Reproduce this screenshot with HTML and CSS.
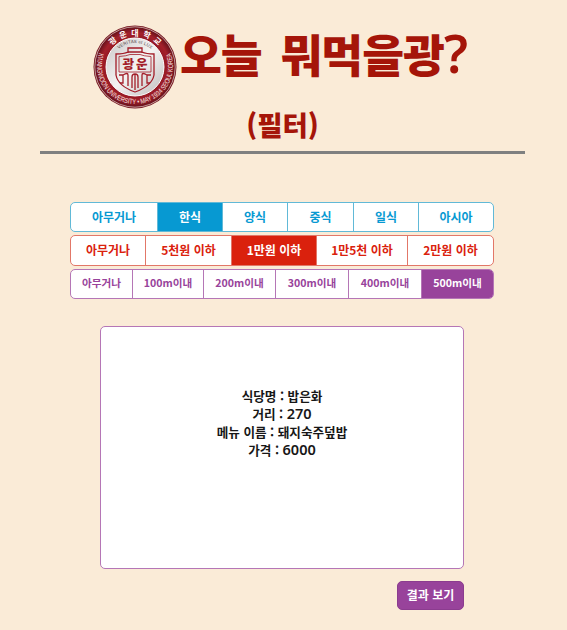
FILE: index.html
```
<!DOCTYPE html>
<html lang="ko">
<head>
<meta charset="utf-8">
<title>오늘 뭐먹을광?</title>
<link rel="stylesheet" href="styles.css">
</head>
<body>
<header class="header">
  <div class="brand">
    <svg class="logo" viewBox="0 0 84 84">
      <defs>
        <radialGradient id="rim"><stop offset=".65" stop-color="#8e1520"/><stop offset=".85" stop-color="#a3202b"/><stop offset="1" stop-color="#64101a"/></radialGradient>
        <linearGradient id="disc" x1="0" y1="0" x2="1" y2="1"><stop offset="0" stop-color="#c9c6c6"/><stop offset=".5" stop-color="#f5f3f2"/><stop offset="1" stop-color="#bebbbb"/></linearGradient>
        <path id="top" d="M10.5 42a31.5 31.5 0 0 1 63 0"/>
        <path id="bottom" d="M6.5 27.5A38 38 0 1 0 77.5 27.5"/>
        <path id="motto" d="M18 42a24 24 0 0 1 48 0"/>
      </defs>
      <circle cx="42" cy="42" r="41.5" fill="#781923"/>
      <circle cx="42" cy="42" r="40.2" fill="url(#rim)" stroke="#d7b9b5" stroke-width=".8"/>
      <circle cx="42" cy="42" r="29" fill="url(#disc)" stroke="#fff" stroke-width="1"/>
      <text class="seal-top"><textPath href="#top" startOffset="50%" text-anchor="middle" textLength="52">광운대학교</textPath></text>
      <text class="seal-bottom"><textPath href="#bottom" startOffset="50%" text-anchor="middle" textLength="146" lengthAdjust="spacingAndGlyphs">KWANGWOON UNIVERSITY • MAY 1934 SEOUL KOREA</textPath></text>
      <text class="seal-motto"><textPath href="#motto" startOffset="50%" text-anchor="middle" textLength="35">VERITAS et LUX</textPath></text>
      <g fill="none" stroke="#a31d29" stroke-width="1.3">
        <path d="M35 28V23H49V28M23 29Q31 29 35 27H49Q53 29 61 29V50Q59 61 42 67Q25 61 23 50Z"/>
        <path d="M26 31.5Q34 31 37 29.5H47Q50 31 58 31.5V47H26Z" stroke-width=".8"/>
        <path d="M26 50H30V58H27M30 50Q35 47 35 50V61M39 63V52Q39 49 42 49M45 63V52Q45 49 42 49V65M49 61V50Q49 47 54 50V58H57M54 50H58" stroke-width="1.3"/>
      </g>
      <text class="seal-name" x="42" y="43.8" text-anchor="middle" textLength="25">광운</text>
    </svg>
    <h1 class="title">오늘 뭐먹을광<span class="mark">?</span></h1>
  </div>
  <h2 class="subtitle">(필터)</h2>
</header>
<main class="content">
  <div class="filters">
    <div class="group food"><span>아무거나</span><span class="on">한식</span><span>양식</span><span>중식</span><span>일식</span><span>아시아</span></div>
    <div class="group price"><span>아무거나</span><span>5천원 이하</span><span class="on">1만원 이하</span><span>1만5천 이하</span><span>2만원 이하</span></div>
    <div class="group distance"><span>아무거나</span><span>100m이내</span><span>200m이내</span><span>300m이내</span><span>400m이내</span><span class="on">500m이내</span></div>
  </div>
  <section class="result">
    <p>식당명 : 밥은화</p>
    <p>거리 : <span class="num">270</span></p>
    <p>메뉴 이름 : 돼지숙주덮밥</p>
    <p>가격 : <span class="num">6000</span></p>
  </section>
  <div class="actions"><button class="submit">결과 보기</button></div>
</main>
</body>
</html>
```
FILE: styles.css
```
* { box-sizing: border-box; }
body {
  margin: 0;
  height: 630px;
  overflow: hidden;
  background: #faebd7;
  font-family: "Noto Sans CJK KR", sans-serif;
}
h1, h2, p { margin: 0; }
.header {
  width: 485px;
  height: 154px;
  margin-left: 40px;
  border-bottom: 3px solid #7f8080;
}
.brand { display: flex; height: 108px; padding: 25px 0 0 53px; }
.logo { flex: none; width: 84px; height: 84px; }
.title {
  margin: 5px 0 0 3px;
  color: #a51509;
  font-size: 45.5px;
  font-weight: 900;
  line-height: 46px;
  letter-spacing: -1px;
  word-spacing: 7px;
  white-space: pre;
}
.mark { font-family: "Noto Sans", sans-serif; font-size: 52px; font-weight: 600; line-height: 1px; }
.subtitle {
  color: #a51509;
  font-size: 27.5px;
  font-weight: 900;
  line-height: 32px;
  text-align: center;
}
.seal-top { fill: #fff; font-size: 8px; font-weight: 700; }
.seal-bottom { fill: #f5e4e1; font: 7.2px "Liberation Sans", sans-serif; }
.seal-motto { fill: #55474a; font: 4.4px "Liberation Sans", sans-serif; }
.seal-name { fill: #a31d29; font-size: 12.5px; font-weight: 900; }
.content { padding: 48px 73px 0 70px; }
.filters { display: grid; gap: 3px; }
.group {
  display: grid;
  height: 30.3px;
  overflow: hidden;
  border: 1px solid var(--line);
  border-radius: 5px;
  background: #fff;
  color: var(--main);
  font-size: 12px;
  font-weight: 700;
  line-height: 27px;
  text-align: center;
  white-space: nowrap;
}
.group span + span { border-left: 1px solid var(--line); }
.group .on { background: var(--main); color: #fff; }
.food { --main: #0799d2; --line: #61b9d7; grid-template-columns: 86px 65px 65px 66px 65px 1fr; }
.price { --main: #da210d; --line: #e27768; grid-template-columns: 74px 86px 85px 91px 1fr; }
.distance { --main: #98439b; --line: #b576b6; grid-template-columns: 61px 71px 72px 73px 73px 1fr; font-size: 10.6px; line-height: 26px; }
.result {
  width: 364px;
  height: 243px;
  margin: 27px 0 0 30px;
  padding-top: 60px;
  border: 1px solid #b576b6;
  border-radius: 5px;
  background: #fff;
  color: #171717;
  font-size: 12.6px;
  font-weight: 700;
  line-height: 18px;
  text-align: center;
}
.num { font-family: "Noto Sans", sans-serif; font-size: 14.5px; font-weight: 600; line-height: 1px; }
.actions { display: flex; justify-content: flex-end; padding: 12px 30px 0 0; }
.submit {
  width: 67px;
  height: 29px;
  padding: 0 0 2px;
  border: 1px solid #8b3c8f;
  border-radius: 5px;
  background: #98439b;
  color: #fff;
  font: 700 12px "Noto Sans CJK KR", sans-serif;
}
```
